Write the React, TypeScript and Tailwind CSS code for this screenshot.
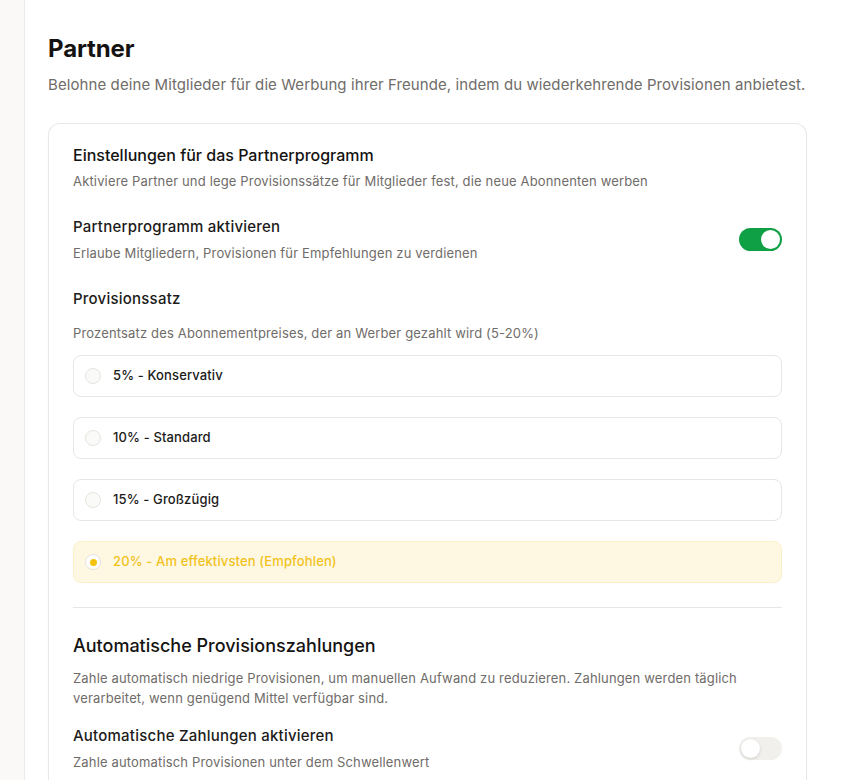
import React from "react";

function Toggle({ on }: { on: boolean }) {
  return (
    <div
      className={
        "flex h-[23px] w-[43px] shrink-0 items-center rounded-full p-[2px] " +
        (on ? "justify-end bg-[#0f9f45]" : "justify-start bg-[#f1f0ed]")
      }
    >
      <div
        className={
          "h-[19px] w-[19px] rounded-full bg-white " +
          (on ? "" : "shadow-[0_1px_3px_rgba(0,0,0,0.15)]")
        }
      />
    </div>
  );
}

function Option({ label, selected }: { label: string; selected?: boolean }) {
  return (
    <div
      className={
        "flex h-[42px] items-center gap-3 rounded-lg border pl-[11px] " +
        (selected ? "border-[#fbf0c8] bg-[#fef8e3]" : "border-[#e8e6e3] bg-white")
      }
    >
      <div
        className={
          "flex h-4 w-4 items-center justify-center rounded-full border " +
          (selected ? "border-[#e6e3de] bg-white" : "border-[#e6e4df] bg-[#fafaf8]")
        }
      >
        {selected && <div className="h-[7px] w-[7px] rounded-full bg-[#f4c20d]" />}
      </div>
      <span
        className={
          "text-[13px] font-medium tracking-[0.01em] " + (selected ? "text-[#f2c21b]" : "text-[#1c1b1a]")
        }
      >
        {label}
      </span>
    </div>
  );
}

export default function App() {
  return (
    <div
      className="flex h-[780px] w-full overflow-hidden bg-[#fcfcfb] text-[#1c1b1a]"
      style={{ fontFamily: "Inter, 'Noto Sans', sans-serif" }}
    >
      <div className="w-[25px] shrink-0 border-r border-[#ecebe8] bg-[#faf9f7]" />
      <div className="flex-1 bg-white pl-[23px] pt-[33px]">
        <h1 className="text-2xl font-bold leading-8 tracking-[-0.005em] text-[#141312]">Partner</h1>
        <p className="mt-2 text-[15px] leading-6 tracking-[0.006em] text-[#6f6c69]">
          Belohne deine Mitglieder für die Werbung ihrer Freunde, indem du wiederkehrende Provisionen anbietest.
        </p>
        <div className="mt-[26px] h-[700px] w-[759px] rounded-t-xl border border-b-0 border-[#e9e8e5] bg-white px-6 pt-[19px] shadow-[0_1px_2px_rgba(0,0,0,0.03)]">
          <h2 className="text-base font-medium leading-6 text-[#141312]">
            Einstellungen für das Partnerprogramm
          </h2>
          <p className="mt-1 text-[13px] leading-5 tracking-[0.012em] text-[#6f6c69]">
            Aktiviere Partner und lege Provisionssätze für Mitglieder fest, die neue Abonnenten werben
          </p>

          <div className="mt-6 flex items-center justify-between">
            <div>
              <div className="text-[15px] font-medium leading-6 tracking-[0.015em] text-[#1c1b1a]">
                Partnerprogramm aktivieren
              </div>
              <div className="mt-1 text-[13px] leading-5 tracking-[0.012em] text-[#6f6c69]">
                Erlaube Mitgliedern, Provisionen für Empfehlungen zu verdienen
              </div>
            </div>
            <Toggle on />
          </div>

          <div className="mt-6 text-[15px] font-medium leading-6 tracking-[0.015em] text-[#1c1b1a]">Provisionssatz</div>
          <p className="mt-3 text-[13px] leading-5 tracking-[0.012em] text-[#6f6c69]">
            Prozentsatz des Abonnementpreises, der an Werber gezahlt wird (5-20%)
          </p>

          <div className="mt-3 flex flex-col gap-5">
            <Option label="5% - Konservativ" />
            <Option label="10% - Standard" />
            <Option label="15% - Großzügig" />
            <Option label="20% - Am effektivsten (Empfohlen)" selected />
          </div>

          <div className="mt-6 h-px bg-[#e8e6e3]" />

          <h2 className="mt-6 text-lg font-medium leading-7 text-[#141312]">
            Automatische Provisionszahlungen
          </h2>
          <p className="mt-2 text-[13px] leading-5 tracking-[0.012em] text-[#6f6c69]">
            Zahle automatisch niedrige Provisionen, um manuellen Aufwand zu reduzieren. Zahlungen werden täglich
            verarbeitet, wenn genügend Mittel verfügbar sind.
          </p>

          <div className="mt-4 flex items-center justify-between">
            <div>
              <div className="text-[15px] font-medium leading-6 tracking-[0.015em] text-[#1c1b1a]">
                Automatische Zahlungen aktivieren
              </div>
              <div className="mt-1 text-[13px] leading-5 tracking-[0.012em] text-[#6f6c69]">
                Zahle automatisch Provisionen unter dem Schwellenwert
              </div>
            </div>
            <Toggle on={false} />
          </div>
        </div>
      </div>
    </div>
  );
}
